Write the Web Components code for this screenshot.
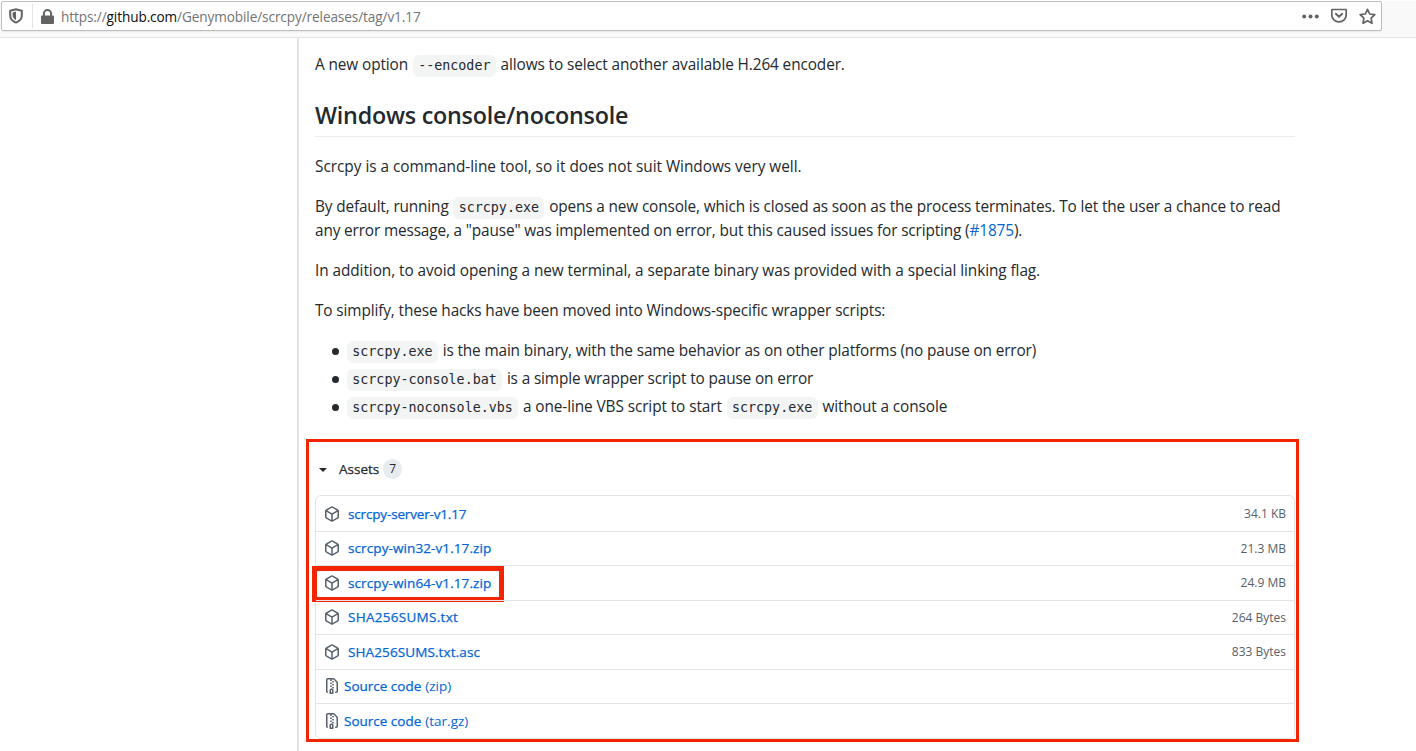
<!DOCTYPE html>
<html lang="en"><head><meta charset="utf-8"><title>scrcpy v1.17</title>
<style>
html,body{margin:0;padding:0;height:751px;overflow:hidden;background:#fff}
body{font-family:"Open Sans","Noto Sans",sans-serif;color:#24292e}
</style></head><body>
<browser-bar url-host="github.com" url-pre="https://" url-post="/Genymobile/scrcpy/releases/tag/v1.17"></browser-bar>
<page-layout>
  <md-p style="letter-spacing:-.105px">A new option <code-chip>--encoder</code-chip> allows to select another available H.264 encoder.</md-p>
  <md-h2>Windows console/noconsole</md-h2>
  <md-p style="letter-spacing:-.017px">Scrcpy is a command-line tool, so it does not suit Windows very well.</md-p>
  <md-p style="letter-spacing:-.14px">By default, running <code-chip>scrcpy.exe</code-chip> opens a new console, which is closed as soon as the process terminates. To let the user a chance to read<br>any error message, a "pause" was implemented on error, but this caused issues for scripting (<a-link>#1875</a-link>).</md-p>
  <md-p style="letter-spacing:-.07px">In addition, to avoid opening a new terminal, a separate binary was provided with a special linking flag.</md-p>
  <md-p style="letter-spacing:-.115px">To simplify, these hacks have been moved into Windows-specific wrapper scripts:</md-p>
  <md-li style="letter-spacing:-.14px"><code-chip>scrcpy.exe</code-chip> is the main binary, with the same behavior as on other platforms (no pause on error)</md-li>
  <md-li style="letter-spacing:-.14px"><code-chip>scrcpy-console.bat</code-chip> is a simple wrapper script to pause on error</md-li>
  <md-li><code-chip>scrcpy-noconsole.vbs</code-chip> a one-line VBS script to start <code-chip>scrcpy.exe</code-chip> without a console</md-li>
  <asset-panel count="7">
    <asset-row style="--ls:-.16px" name="scrcpy-server-v1.17" size="34.1 KB"></asset-row>
    <asset-row style="--ls:.1px" name="scrcpy-win32-v1.17.zip" size="21.3 MB"></asset-row>
    <asset-row style="--ls:.1px" name="scrcpy-win64-v1.17.zip" size="24.9 MB" marked></asset-row>
    <asset-row style="--ls:.29px" name="SHA256SUMS.txt" size="264 Bytes"></asset-row>
    <asset-row style="--ls:.11px" name="SHA256SUMS.txt.asc" size="833 Bytes"></asset-row>
    <asset-row name="Source code" note="(zip)" kind="zip"></asset-row>
    <asset-row name="Source code" note="(tar.gz)" kind="zip"></asset-row>
  </asset-panel>
</page-layout>
<script>
const PKG='M8.878.392a1.75 1.75 0 00-1.756 0l-5.25 3.045A1.75 1.75 0 001 4.951v6.098c0 .624.332 1.2.872 1.514l5.25 3.045a1.75 1.75 0 001.756 0l5.25-3.045c.54-.313.872-.89.872-1.514V4.951c0-.624-.332-1.2-.872-1.514L8.878.392zM7.875 1.69a.25.25 0 01.25 0l4.63 2.685L8 7.133 3.245 4.375l4.63-2.685zM2.5 5.677v5.372c0 .09.047.171.125.216l4.625 2.683V8.432L2.5 5.677zm6.25 8.271l4.625-2.683a.25.25 0 00.125-.216V5.677L8.75 8.432v5.516z';
const ZIP='M3.5 1.75a.25.25 0 01.25-.25h3a.75.75 0 000 1.5h.5a.75.75 0 000-1.5h2.086a.25.25 0 01.177.073l2.914 2.914a.25.25 0 01.073.177v8.586a.25.25 0 01-.25.25h-.5a.75.75 0 000 1.5h.5A1.75 1.75 0 0014 13.25V4.664c0-.464-.184-.909-.513-1.237L10.573.513A1.75 1.75 0 009.336 0H3.75A1.75 1.75 0 002 1.75v11.5c0 .649.353 1.214.874 1.515a.75.75 0 10.752-1.298.25.25 0 01-.126-.217V1.75zM8.75 3a.75.75 0 000 1.5h.5a.75.75 0 000-1.5h-.5zM6 5.25a.75.75 0 01.75-.75h.5a.75.75 0 010 1.5h-.5A.75.75 0 016 5.25zm2 1.5A.75.75 0 018.75 6h.5a.75.75 0 010 1.5h-.5A.75.75 0 018 6.75zm-1.25.75a.75.75 0 000 1.5h.5a.75.75 0 000-1.5h-.5zM8 9.75A.75.75 0 018.75 9h.5a.75.75 0 010 1.5h-.5A.75.75 0 018 9.75zm-.75.75a1.75 1.75 0 00-1.75 1.75v3c0 .414.336.75.75.75h2.5a.75.75 0 00.75-.75v-3a1.75 1.75 0 00-1.75-1.75h-.5zM7 12.25a.25.25 0 01.25-.25h.5a.25.25 0 01.25.25v2.25H7v-2.25z';
function def(name,html,setup){customElements.define(name,class extends HTMLElement{
  constructor(){super();this.attachShadow({mode:'open'}).innerHTML=html;}
  connectedCallback(){if(setup)setup(this,this.shadowRoot);}
});}
def('browser-bar',`<style>
:host{display:block;height:36px;background:#f9f9fa;border-bottom:1px solid #e2e2e3}
.url{box-sizing:border-box;height:30px;margin:1px 34px 0 1px;background:#fff;border:1px solid #bdbdbd;border-radius:2px;display:flex;align-items:center;box-shadow:0 1px 1px rgba(0,0,0,.06)}
.sh{width:16px;height:16px;margin-left:6px;flex:none}
.sep{width:1px;height:24px;background:#e4e4e4;margin:0 8px 0 8px;flex:none}
.lock{width:13px;height:15px;flex:none;margin-right:7px}
.t{font:13.6px "Open Sans",sans-serif;color:#737373;white-space:nowrap;flex:1;letter-spacing:-.1px}
.t b{font-weight:400;color:#0c0c0d}
.act{display:flex;align-items:center;gap:12px;margin-right:5px}
svg{display:block}
</style><div class="url">
<svg class="sh" viewBox="0 0 16 16"><path fill="none" stroke="#636363" stroke-width="2" d="M2.200 2.800 8 1.200l5.800 1.600v4.700c0 3.200-2.400 5.800-5.800 7.200C4.600 13.300 2.200 10.700 2.200 7.500z"/><path fill="#636363" d="M8 3.600v8.600c-1.900-1-3.200-2.600-3.400-4.600V4.600z"/></svg>
<div class="sep"></div>
<svg class="lock" viewBox="0 0 14 16"><path fill="#636363" d="M2 7V5a5 5 0 0110 0v2h.6c.8 0 1.400.6 1.400 1.400v6.200c0 .8-.6 1.400-1.400 1.400H1.400C.6 16 0 15.400 0 14.600V8.400C0 7.600.6 7 1.400 7zm2.200 0h5.600V5a2.800 2.800 0 00-5.600 0z"/></svg>
<span class="t"><span id="a"></span><b id="b"></b><span id="c"></span></span>
<div class="act">
<svg width="17" height="5" viewBox="0 0 17 5"><circle cx="2.200" cy="2.500" r="2" fill="#636363"/><circle cx="8.500" cy="2.500" r="2" fill="#636363"/><circle cx="14.800" cy="2.500" r="2" fill="#636363"/></svg>
<svg width="16" height="16" viewBox="0 0 16 16"><path fill="none" stroke="#636363" stroke-width="1.700" d="M1.200 1.500h13.600c.3 0 .4.200.4.400v5.100c0 3.700-3.200 6.900-7.200 6.900S.8 10.700.8 7V1.900c0-.2.100-.4.400-.4z"/><path fill="none" stroke="#636363" stroke-width="1.900" stroke-linecap="round" stroke-linejoin="round" d="M4.800 5.800 8 8.800l3.200-3"/></svg>
<svg width="17" height="17" viewBox="0 0 17 17"><path fill="none" stroke="#636363" stroke-width="1.700" stroke-linejoin="round" d="M8.500 1.300l2.200 4.700 5.100.7-3.700 3.500.9 5.100-4.500-2.500-4.500 2.500.9-5.100L1.200 6.700l5.100-.7z"/></svg>
</div></div>`,(h,s)=>{s.getElementById('a').textContent=h.getAttribute('url-pre');s.getElementById('b').textContent=h.getAttribute('url-host');s.getElementById('c').textContent=h.getAttribute('url-post');});
def('page-layout',`<style>
:host{display:grid;grid-template-columns:297px 1fr;height:714px}
.main{border-left:2px solid #e1e4e8;padding:15px 121px 0 16px;min-width:0}
</style><div class="side"></div><div class="main"><slot></slot></div>`);
def('md-p',`<style>:host{display:block;font-size:15.360px;line-height:24px;margin:0 0 16px;color:#24292e;letter-spacing:-.09px}</style><slot></slot>`);
def('md-h2',`<style>:host{display:block;font-size:23.300px;font-weight:600;line-height:30px;margin:23px 0 18px;padding-bottom:6px;border-bottom:1px solid #eaecef;color:#24292e;letter-spacing:-.22px}</style><slot></slot>`);
def('md-li',`<style>:host{display:block;font-size:15.360px;line-height:24px;margin:0 0 4px 31px;color:#24292e;letter-spacing:-.09px}
:host::before{content:"";display:inline-block;width:7px;height:7px;border-radius:50%;background:#24292e;margin:0 7px 1px -14px;vertical-align:middle}</style><slot></slot>`);
def('a-link',`<style>:host{color:#0366d6}</style><slot></slot>`);
def('code-chip',`<style>:host{display:inline-block;font:13.330px/22px "DejaVu Sans Mono","Liberation Mono",monospace;letter-spacing:0;background:#f3f4f4;color:#24292e;border-radius:6px;padding:0 5.300px;margin:0 1px;vertical-align:baseline}</style><slot></slot>`);
def('asset-panel',`<style>
:host{display:block;margin-top:37px;position:relative}
.head{display:flex;align-items:center;height:26px;margin:0 0 13px 0;font-size:13.500px;font-weight:400;-webkit-text-stroke:.25px #24292e;color:#24292e}
.tri{width:0;height:0;border:4px solid transparent;border-top:4.500px solid #24292e;border-bottom:0;margin:1px 12px 0 4px}
.n{display:inline-block;min-width:9px;text-align:center;background:#e9ecef;border-radius:10px;font-size:12px;font-weight:400;-webkit-text-stroke:0;line-height:20px;padding:0 5px;margin-left:4px}
.list{border:1px solid #e1e4e8;border-radius:6px;display:flex;flex-direction:column}
.mark{position:absolute;left:-9px;top:-17px;width:987px;height:297px;border:3px solid #f32500;pointer-events:none}
</style>
<div class="head"><span class="tri"></span>Assets<span class="n" id="n"></span></div>
<div class="list"><slot></slot></div><div class="mark"></div>`,(h,s)=>{s.getElementById('n').textContent=h.getAttribute('count');});
def('asset-row',`<style>
:host{display:flex;align-items:center;height:34.500px;box-sizing:border-box;padding:0 8px 0 8px;position:relative;font-size:13.500px;border-top:1px solid #e1e4e8}
:host(:first-child){border-top-color:transparent}
svg{display:block;flex:none;fill:#586069;margin-right:8px}
.name{color:#0366d6;-webkit-text-stroke:.25px #0366d6;letter-spacing:var(--ls,0);white-space:nowrap}
.note{color:#0366d6;margin-left:4px;font-weight:400}
.size{margin-left:auto;color:#586069;font-size:12px}
.mark{display:none;position:absolute;left:-4px;top:0;width:182px;height:26px;border:5px solid #f32500;pointer-events:none}
:host([marked]) .mark{display:block}
</style><svg width="16" height="16" viewBox="0 0 16 16"><path id="p"/></svg><span class="name" id="nm"></span><span class="note" id="nt"></span><span class="size" id="sz"></span><div class="mark"></div>`,(h,s)=>{
  s.getElementById('p').setAttribute('fill-rule','evenodd');
  s.getElementById('p').setAttribute('d',h.getAttribute('kind')==='zip'?ZIP:PKG);
  s.getElementById('nm').textContent=h.getAttribute('name');
  s.getElementById('nt').textContent=h.getAttribute('note')||'';
  s.getElementById('sz').textContent=h.getAttribute('size')||'';
  if(h.getAttribute('kind')==='zip'){s.querySelector('svg').style.marginRight='4px';}
});
</script></body></html>
